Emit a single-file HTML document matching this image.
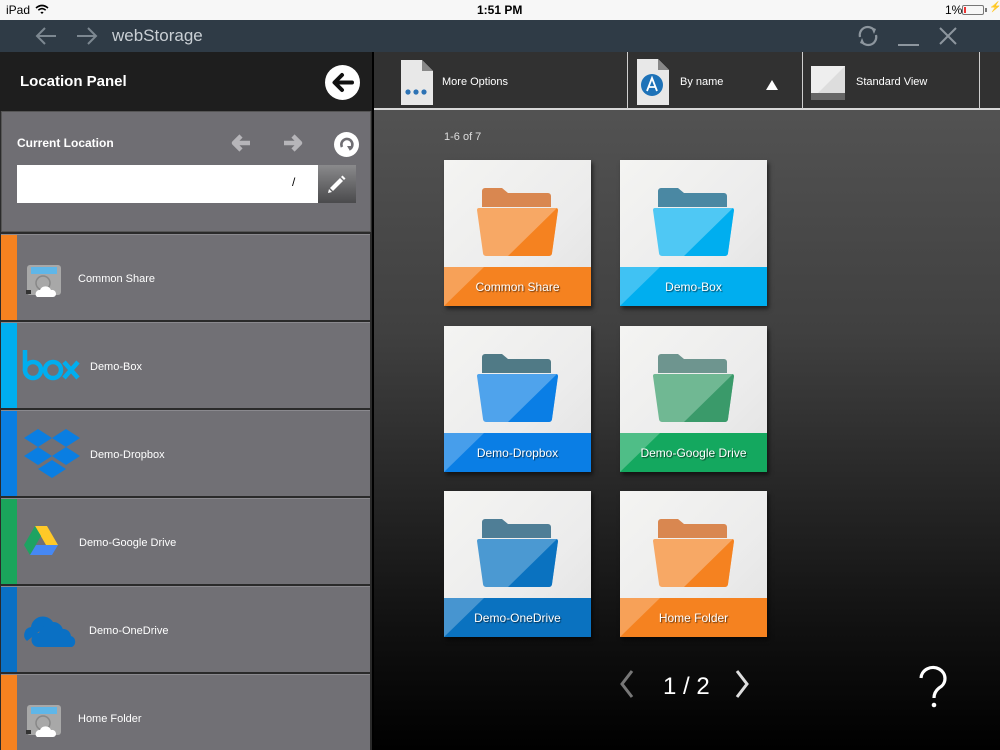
<!DOCTYPE html>
<html style="overflow:hidden"><head><meta charset="utf-8">
<style>
*{margin:0;padding:0;box-sizing:border-box}
body{width:1000px;height:750px;overflow:hidden;font-family:"Liberation Sans",Helvetica,Arial,sans-serif;background:#000;position:relative}
.abs{position:absolute}
#status{left:0;top:0;width:1000px;height:20px;background:#f7f7f7;font-size:12px;color:#000}
#title{left:0;top:20px;width:1000px;height:32px;background:#2f3b46}
#side{left:0;top:52px;width:372px;height:698px;background:#2a2a2a}
#sidehead{left:0;top:52px;width:372px;height:59px;background:#1e1e1e}
#curloc{left:1px;top:111px;width:370px;height:121px;background:#6f6e73;border:1px solid #555}
.item{position:absolute;left:1px;width:369px;height:86px;background:#717075;border-top:1px solid #8a898e;overflow:hidden}
.item .bar{position:absolute;left:0;top:0;width:16px;height:100%}
.item .t{position:absolute;top:1px;height:86px;display:flex;align-items:center;font-size:11px;color:#fff}
#main{left:374px;top:52px;width:626px;height:698px;background:linear-gradient(#575757 0%,#404040 40%,#111 82%,#000 100%)}
#tool{left:374px;top:52px;width:626px;height:58px;background:#313131;border-bottom:2px solid #d8d8d8}
.tsep{position:absolute;top:52px;width:1px;height:57px;background:#cfcfcf}
.tl{position:absolute;font-size:11px;color:#fff}
.tile{position:absolute;width:147px;height:146px;background:linear-gradient(135deg,#f4f4f2 0%,#ececec 60%,#e2e2e2 100%);box-shadow:2px 3px 4px rgba(0,0,0,.55);overflow:hidden}
.tile .band{position:absolute;left:0;bottom:0;width:100%;height:39px;display:flex;align-items:center;justify-content:center;font-size:12px;color:#fff;text-shadow:1px 1px 1px rgba(0,0,0,.6)}
.tile svg{position:absolute;left:0;top:0}
</style></head><body>

<div id="status" class="abs">
 <span class="abs" style="left:6px;top:3px">iPad</span>
 <svg class="abs" style="left:35px;top:4px" width="14" height="11" viewBox="0 0 14 11"><path d="M1 4 Q7 -1 13 4" stroke="#000" stroke-width="1.6" fill="none"/><path d="M3.3 6.2 Q7 3 10.7 6.2" stroke="#000" stroke-width="1.6" fill="none"/><path d="M5.4 8.4 Q7 7 8.6 8.4 L7 10 Z" fill="#000"/></svg>
 <span class="abs" style="left:477px;top:3px;font-weight:bold;font-size:12px">1:51 PM</span>
 <span class="abs" style="left:945px;top:3px">1%</span>
 <div class="abs" style="left:962px;top:5px;width:22px;height:10px;border:1px solid #777;border-radius:2px"><div style="width:2px;height:6px;margin:1px;background:#e33"></div></div>
 <div class="abs" style="left:985px;top:8px;width:2px;height:4px;background:#777"></div>
 <span class="abs" style="left:989px;top:2px;font-size:10px">&#x26A1;</span>
</div>

<div id="title" class="abs">
 <svg class="abs" style="left:34px;top:6px" width="24" height="20" viewBox="0 0 24 20"><path d="M22 10H3M11 2L3 10L11 18" stroke="#7d8891" stroke-width="2" fill="none"/></svg>
 <svg class="abs" style="left:75px;top:6px" width="24" height="20" viewBox="0 0 24 20"><path d="M2 10H21M13 2L21 10L13 18" stroke="#7d8891" stroke-width="2" fill="none"/></svg>
 <span class="abs" style="left:112px;top:6px;font-size:17px;color:#c9cfd4">webStorage</span>
 <svg class="abs" style="left:856px;top:5px" width="24" height="22" viewBox="0 0 24 22"><path d="M4 12 A8 8 0 0 1 18 5" stroke="#8d969e" stroke-width="2.2" fill="none"/><path d="M15 2 L20 4 L18 9Z" fill="#8d969e"/><path d="M20 10 A8 8 0 0 1 6 17" stroke="#8d969e" stroke-width="2.2" fill="none"/><path d="M9 20 L4 18 L6 13Z" fill="#8d969e"/></svg>
 <div class="abs" style="left:898px;top:24px;width:21px;height:2px;background:#8d969e"></div>
 <svg class="abs" style="left:938px;top:6px" width="20" height="20" viewBox="0 0 20 20"><path d="M2 2L18 18M18 2L2 18" stroke="#8d969e" stroke-width="2"/></svg>
</div>

<div id="side" class="abs"></div>
<div id="sidehead" class="abs">
 <span class="abs" style="left:20px;top:21px;font-size:15px;font-weight:bold;color:#fff">Location Panel</span>
 <div class="abs" style="left:325px;top:13px;width:35px;height:35px;border-radius:50%;background:#fff"></div>
 <svg class="abs" style="left:325px;top:13px" width="35" height="35" viewBox="0 0 35 35"><path d="M27 17.5H10M17 10L9.5 17.5L17 25" stroke="#111" stroke-width="4" fill="none" stroke-linecap="round" stroke-linejoin="round"/></svg>
</div>
<div id="curloc" class="abs">
 <span class="abs" style="left:15px;top:24px;font-size:12px;font-weight:bold;color:#fff">Current Location</span>
 <svg class="abs" style="left:227px;top:20px" width="24" height="22" viewBox="0 0 24 22"><path d="M21 11H6M12 4L5 11L12 18" stroke="#b6b5b9" stroke-width="4.5" fill="none" stroke-linejoin="round"/></svg>
 <svg class="abs" style="left:279px;top:20px" width="24" height="22" viewBox="0 0 24 22"><path d="M3 11H18M12 4L19 11L12 18" stroke="#b6b5b9" stroke-width="4.5" fill="none" stroke-linejoin="round"/></svg>
 <div class="abs" style="left:332px;top:20px;width:25px;height:25px;border-radius:50%;background:#fff"></div>
 <svg class="abs" style="left:332px;top:20px" width="25" height="25" viewBox="0 0 25 25"><path d="M8 15 A5.5 5.5 0 1 1 16 17" stroke="#6f6e73" stroke-width="2.6" fill="none"/><path d="M13 14 L18 14 L16 19Z" fill="#6f6e73"/></svg>
 <div class="abs" style="left:15px;top:53px;width:301px;height:38px;background:#fff"></div>
 <span class="abs" style="left:290px;top:63px;font-size:12px;color:#000">/</span>
 <div class="abs" style="left:316px;top:53px;width:38px;height:38px;background:linear-gradient(#8a8a8c,#4a4a4c)"></div>
 <svg class="abs" style="left:324px;top:61px" width="22" height="22" viewBox="0 0 22 22"><path d="M4 15 L14 5 L17 8 L7 18 Z" fill="#fff"/><path d="M15 4 L16.5 2.5 L19.5 5.5 L18 7Z" fill="#fff"/><path d="M3 16 L6 19 L2 20Z" fill="#fff"/></svg>
</div>

<!-- items -->
<div class="item" style="top:234px"><div class="bar" style="background:#f58220"></div>
 <svg class="abs" style="left:24px;top:28px" width="40" height="38" viewBox="0 0 40 38"><rect x="2" y="2" width="34" height="30" rx="3" fill="#a8a8a8"/><rect x="6" y="4" width="26" height="7" fill="#5fb6e8"/><circle cx="18" cy="20" r="7" fill="none" stroke="#888" stroke-width="1.5"/><rect x="1" y="27" width="5" height="4" fill="#333"/><path d="M12 34 a4 4 0 0 1 3-7 a6 6 0 0 1 11 0 a4 4 0 0 1 5 4 a3 3 0 0 1-3 3 z" fill="#fff"/></svg>
 <div class="t" style="left:77px">Common Share</div></div>
<div class="item" style="top:322px"><div class="bar" style="background:#00aeef"></div>
 <svg class="abs" style="left:21px;top:27px" width="60" height="32" viewBox="0 0 60 32"><g stroke="#00aeef" stroke-width="4.5" fill="none"><path d="M3 0V21"/><circle cx="11" cy="20" r="8"/><circle cx="31" cy="20" r="8"/><path d="M42 12L56 28M56 12L42 28"/></g></svg>
 <div class="t" style="left:89px">Demo-Box</div></div>
<div class="item" style="top:410px"><div class="bar" style="background:#0a7ee2"></div>
 <svg class="abs" style="left:22px;top:16px" width="58" height="56" viewBox="0 0 58 56"><g fill="#0a7ee2"><path d="M1 11L15 2L29 11L15 20Z"/><path d="M29 11L43 2L57 11L43 20Z"/><path d="M1 29L15 20L29 29L15 38Z"/><path d="M29 29L43 20L57 29L43 38Z"/><path d="M15 42L29 33L43 42L29 51Z"/></g></svg>
 <div class="t" style="left:89px">Demo-Dropbox</div></div>
<div class="item" style="top:498px"><div class="bar" style="background:#1aa55b"></div>
 <svg class="abs" style="left:22px;top:26px" width="36" height="32" viewBox="0 0 36 32"><path d="M12 1H24L35 20H23Z" fill="#ffc928"/><path d="M12 1L1 20L7 30L18 11Z" fill="#1ea362"/><path d="M7 30H29L35 20H13Z" fill="#4688f4"/></svg>
 <div class="t" style="left:78px">Demo-Google Drive</div></div>
<div class="item" style="top:586px"><div class="bar" style="background:#0a70c4"></div>
 <svg class="abs" style="left:20px;top:24px" width="60" height="38" viewBox="0 0 60 38"><path d="M6 30 a8 8 0 0 1 4-14 a12 12 0 0 1 22-5 a10 10 0 0 1 10 8 H20 Z" fill="#0a70c4"/><path d="M17 36 a7 7 0 0 1 1-14 a11 11 0 0 1 20-3 a8 8 0 0 1 12 6 a6 6 0 0 1 1 11 Z" fill="#0a70c4"/></svg>
 <div class="t" style="left:88px">Demo-OneDrive</div></div>
<div class="item" style="top:674px;height:76px"><div class="bar" style="background:#f58220"></div>
 <svg class="abs" style="left:24px;top:28px" width="40" height="38" viewBox="0 0 40 38"><rect x="2" y="2" width="34" height="30" rx="3" fill="#a8a8a8"/><rect x="6" y="4" width="26" height="7" fill="#5fb6e8"/><circle cx="18" cy="20" r="7" fill="none" stroke="#888" stroke-width="1.5"/><rect x="1" y="27" width="5" height="4" fill="#333"/><path d="M12 34 a4 4 0 0 1 3-7 a6 6 0 0 1 11 0 a4 4 0 0 1 5 4 a3 3 0 0 1-3 3 z" fill="#fff"/></svg>
 <div class="t" style="left:77px">Home Folder</div></div>

<div id="main" class="abs"></div>
<div id="tool" class="abs">
 <svg class="abs" style="left:26px;top:7px" width="34" height="47" viewBox="0 0 34 47"><path d="M1 1H22L33 12V46H1Z" fill="#e8e8e8"/><path d="M22 1L33 12H22Z" fill="#888"/><circle cx="8" cy="33" r="2.6" fill="#2d73b5"/><circle cx="16" cy="33" r="2.6" fill="#2d73b5"/><circle cx="24" cy="33" r="2.6" fill="#2d73b5"/></svg>
 <span class="tl" style="left:68px;top:24px">More Options</span>
 <svg class="abs" style="left:262px;top:6px" width="34" height="48" viewBox="0 0 34 48"><path d="M1 1H22L33 12V47H1Z" fill="#e8e8e8"/><path d="M22 1L33 12H22Z" fill="#888"/><circle cx="16" cy="27" r="11" fill="#1d72b8"/><path d="M11 33L16 20L21 33M12.5 29H19.5" stroke="#fff" stroke-width="1.8" fill="none"/></svg>
 <span class="tl" style="left:306px;top:24px">By name</span>
 <svg class="abs" style="left:391px;top:27px" width="14" height="12" viewBox="0 0 14 12"><path d="M1 11L7 1L13 11Z" fill="#fff"/></svg>
 <svg class="abs" style="left:437px;top:14px" width="34" height="34" viewBox="0 0 34 34"><rect x="0" y="0" width="34" height="34" fill="#eee"/><path d="M0 34H34V27H0Z" fill="#666"/><path d="M34 0V27H7Z" fill="#ddd"/></svg>
 <span class="tl" style="left:482px;top:24px">Standard View</span>
</div>
<div class="tsep" style="left:627px"></div>
<div class="tsep" style="left:802px"></div>
<div class="tsep" style="left:979px"></div>

<span class="abs" style="left:444px;top:131px;font-size:11px;color:#ddd">1-6 of 7</span>

<!-- tiles -->
<div class="tile" style="left:444px;top:160px">
 <svg width="147" height="146" viewBox="0 0 147 146"><path d="M38 47V31a3 3 0 0 1 3-3H58l6 5H104a3 3 0 0 1 3 3V47Z" fill="#d98750"/><path d="M33 50a2 2 0 0 1 2-2H112a2 2 0 0 1 2 2L108 93a3 3 0 0 1-3 3H42a3 3 0 0 1-3-3Z" fill="#f7a865"/><path d="M113 48L114 50L108 93a3 3 0 0 1-3 3H64Z" fill="#f58220"/><path d="M0 107H147V146H0Z" fill="#f58220"/><path d="M0 107H40L0 146Z" fill="#fff" fill-opacity=".25"/></svg>
 <div class="band">Common Share</div></div>
<div class="tile" style="left:620px;top:160px">
 <svg width="147" height="146" viewBox="0 0 147 146"><path d="M38 47V31a3 3 0 0 1 3-3H58l6 5H104a3 3 0 0 1 3 3V47Z" fill="#4a88a3"/><path d="M33 50a2 2 0 0 1 2-2H112a2 2 0 0 1 2 2L108 93a3 3 0 0 1-3 3H42a3 3 0 0 1-3-3Z" fill="#4fc8f4"/><path d="M113 48L114 50L108 93a3 3 0 0 1-3 3H64Z" fill="#00aeef"/><path d="M0 107H147V146H0Z" fill="#00aeef"/><path d="M0 107H40L0 146Z" fill="#fff" fill-opacity=".25"/></svg>
 <div class="band">Demo-Box</div></div>
<div class="tile" style="left:444px;top:326px">
 <svg width="147" height="146" viewBox="0 0 147 146"><path d="M38 47V31a3 3 0 0 1 3-3H58l6 5H104a3 3 0 0 1 3 3V47Z" fill="#507a86"/><path d="M33 50a2 2 0 0 1 2-2H112a2 2 0 0 1 2 2L108 93a3 3 0 0 1-3 3H42a3 3 0 0 1-3-3Z" fill="#4fa3ec"/><path d="M113 48L114 50L108 93a3 3 0 0 1-3 3H64Z" fill="#0a7ee5"/><path d="M0 107H147V146H0Z" fill="#0a7ee5"/><path d="M0 107H40L0 146Z" fill="#fff" fill-opacity=".25"/></svg>
 <div class="band">Demo-Dropbox</div></div>
<div class="tile" style="left:620px;top:326px">
 <svg width="147" height="146" viewBox="0 0 147 146"><path d="M38 47V31a3 3 0 0 1 3-3H58l6 5H104a3 3 0 0 1 3 3V47Z" fill="#6e958f"/><path d="M33 50a2 2 0 0 1 2-2H112a2 2 0 0 1 2 2L108 93a3 3 0 0 1-3 3H42a3 3 0 0 1-3-3Z" fill="#70b893"/><path d="M113 48L114 50L108 93a3 3 0 0 1-3 3H64Z" fill="#3a9a6a"/><path d="M0 107H147V146H0Z" fill="#14a85f"/><path d="M0 107H40L0 146Z" fill="#fff" fill-opacity=".25"/></svg>
 <div class="band">Demo-Google Drive</div></div>
<div class="tile" style="left:444px;top:491px">
 <svg width="147" height="146" viewBox="0 0 147 146"><path d="M38 47V31a3 3 0 0 1 3-3H58l6 5H104a3 3 0 0 1 3 3V47Z" fill="#4f7e96"/><path d="M33 50a2 2 0 0 1 2-2H112a2 2 0 0 1 2 2L108 93a3 3 0 0 1-3 3H42a3 3 0 0 1-3-3Z" fill="#4b99d2"/><path d="M113 48L114 50L108 93a3 3 0 0 1-3 3H64Z" fill="#0a72c0"/><path d="M0 107H147V146H0Z" fill="#0a72c0"/><path d="M0 107H40L0 146Z" fill="#fff" fill-opacity=".25"/></svg>
 <div class="band">Demo-OneDrive</div></div>
<div class="tile" style="left:620px;top:491px">
 <svg width="147" height="146" viewBox="0 0 147 146"><path d="M38 47V31a3 3 0 0 1 3-3H58l6 5H104a3 3 0 0 1 3 3V47Z" fill="#d98750"/><path d="M33 50a2 2 0 0 1 2-2H112a2 2 0 0 1 2 2L108 93a3 3 0 0 1-3 3H42a3 3 0 0 1-3-3Z" fill="#f7a865"/><path d="M113 48L114 50L108 93a3 3 0 0 1-3 3H64Z" fill="#f58220"/><path d="M0 107H147V146H0Z" fill="#f58220"/><path d="M0 107H40L0 146Z" fill="#fff" fill-opacity=".25"/></svg>
 <div class="band">Home Folder</div></div>

<!-- pager -->
<svg class="abs" style="left:617px;top:668px" width="20" height="32" viewBox="0 0 20 32"><path d="M15 3L5 16L15 29" stroke="#777" stroke-width="3" fill="none"/></svg>
<span class="abs" style="left:663px;top:673px;font-size:24px;color:#fff">1 / 2</span>
<svg class="abs" style="left:732px;top:668px" width="20" height="32" viewBox="0 0 20 32"><path d="M5 3L15 16L5 29" stroke="#ddd" stroke-width="3" fill="none"/></svg>
<svg class="abs" style="left:915px;top:665px" width="36" height="44" viewBox="0 0 36 44"><path d="M6 13 A12 11 0 1 1 24 23 Q19 27 19 33" stroke="#fff" stroke-width="3.2" fill="none"/><circle cx="19" cy="40" r="2.3" fill="#fff"/></svg>
</body></html>
